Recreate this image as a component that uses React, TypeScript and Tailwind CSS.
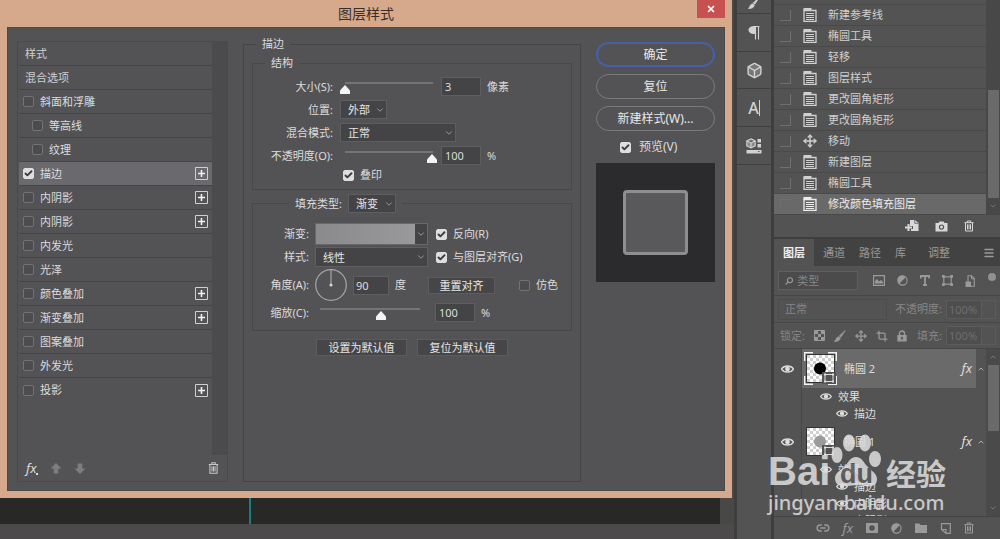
import React, { useState } from 'react';
import { Check, ChevronDown, ChevronUp, Box, Move, X, Crop, Menu, Link2 } from 'lucide-react';

type StyleItem = { id: string; name: string; checked: boolean; indent?: boolean; plus?: boolean };

const STYLE_ITEMS: StyleItem[] = [
  { id: 'bevel', name: '斜面和浮雕', checked: false },
  { id: 'contour', name: '等高线', checked: false, indent: true },
  { id: 'texture', name: '纹理', checked: false, indent: true },
  { id: 'stroke', name: '描边', checked: true, plus: true },
  { id: 'inner-shadow-1', name: '内阴影', checked: false, plus: true },
  { id: 'inner-shadow-2', name: '内阴影', checked: false, plus: true },
  { id: 'inner-glow', name: '内发光', checked: false },
  { id: 'satin', name: '光泽', checked: false },
  { id: 'color', name: '颜色叠加', checked: false, plus: true },
  { id: 'gradient', name: '渐变叠加', checked: false, plus: true },
  { id: 'pattern', name: '图案叠加', checked: false },
  { id: 'outer-glow', name: '外发光', checked: false },
  { id: 'drop', name: '投影', checked: false, plus: true },
];

const HISTORY = ['新建参考线', '椭圆工具', '轻移', '图层样式', '更改圆角矩形', '更改圆角矩形', '移动', '新建图层', '椭圆工具', '修改颜色填充图层'];

/* ---------- Icons ---------- */

const TrashIcon = ({ className }: { className?: string }) => (
  <svg viewBox="0 0 12 14" className={className} fill="none" stroke="currentColor" strokeWidth="1.2">
    <path d="M0.5 3h11M4 3V1h4v2M1.8 3.2V13h8.4V3.2M4.2 5v6M6 5v6M7.8 5v6" />
  </svg>
);

const DocIcon = () => (
  <svg viewBox="0 0 14 14" className="size-[14px]">
    <path d="M0.5 0h8v3h-8z" fill="currentColor" />
    <path d="M1 2.500h12v11H1z" fill="none" stroke="currentColor" strokeWidth="1.300" />
    <path d="M3 5.500h8M3 7.500h8M3 9.500h8M3 11.500h8" stroke="currentColor" strokeWidth="1.100" />
  </svg>
);

const EyeIcon = ({ className }: { className?: string }) => (
  <svg viewBox="0 0 13 10" className={className}>
    <path d="M0.5 5C3 1 10 1 12.5 5 10 9 3 9 0.5 5z" fill="none" stroke="currentColor" strokeWidth="1.4" />
    <circle cx="6.5" cy="5" r="2.4" fill="currentColor" />
  </svg>
);

const CameraIcon = () => (
  <svg viewBox="0 0 13 11" className="h-[11px] w-[13px]">
    <path fillRule="evenodd" fill="currentColor" d="M0.5 2h3l1-1.6h4L9.500 2h3v8.500H.5zM6.500 3.400a2.700 2.700 0 1 0 0 5.400 2.700 2.700 0 0 0 0-5.400zm0 1.200a1.500 1.500 0 1 1 0 3 1.500 1.500 0 0 1 0-3z" />
  </svg>
);

const NewDocIcon = () => (
  <svg viewBox="0 0 14 12" className="h-3 w-[14px]">
    <path d="M5 0h5l3.500 3v8H6V9h2V6H5z" fill="currentColor" />
    <path d="M9.800 0v3.300h3.500" fill="none" stroke="#535353" strokeWidth=".8" />
    <path d="M0 7.500h7M3.500 4v7" stroke="currentColor" strokeWidth="2" />
  </svg>
);

const ImageIcon = () => (
  <svg viewBox="0 0 12 11" className="h-[11px] w-3">
    <path d="M.6.6h10.800v9.800H.6z" fill="none" stroke="currentColor" strokeWidth="1.200" />
    <path d="M2 8.500V6l2-2 2 2.500 2-1.500 2 2v1.500z" fill="currentColor" />
  </svg>
);

const HalfCircleIcon = () => (
  <svg viewBox="0 0 12 12" className="size-[11px]">
    <circle cx="6" cy="6" r="5" fill="none" stroke="currentColor" strokeWidth="1.200" />
    <path d="M9.500 2.500A5 5 0 1 0 2.500 9.500z" fill="currentColor" />
  </svg>
);

const TypeIcon = () => (
  <svg viewBox="0 0 10 11" className="h-[11px] w-[10px]">
    <path d="M.8 3.500V1h8.400v2.500M5 1v9M3 10h4" fill="none" stroke="currentColor" strokeWidth="1.800" />
  </svg>
);

const ShapeIcon = ({ className }: { className?: string }) => (
  <svg viewBox="0 0 12 12" className={className}>
    <path d="M2 2h8v8H2z" fill="none" stroke="currentColor" strokeWidth="1.300" />
    <path d="M0 0h3v3H0zM9 0h3v3H9zM0 9h3v3H0zM9 9h3v3H9z" fill="currentColor" />
  </svg>
);

const SmartIcon = () => (
  <svg viewBox="0 0 10 12" className="h-3 w-[10px]">
    <path d="M3 7V.8h3.500L9.300 3.500v7.700H6" fill="none" stroke="currentColor" strokeWidth="1.100" />
    <path d="M6.500.8v3h2.800" fill="none" stroke="currentColor" />
    <path d="M.5 6.500h5.500V12H.5z" fill="currentColor" />
  </svg>
);

const CheckerIcon = () => (
  <svg viewBox="0 0 11 11" className="size-[11px]">
    <path d="M.5.5h10v10H.5z" fill="none" stroke="currentColor" />
    <path d="M1 1h3v3H1zM7 1h3v3H7zM4 4h3v3H4zM1 7h3v3H1zM7 7h3v3H7z" fill="currentColor" />
  </svg>
);

const BrushIcon = ({ className }: { className?: string }) => (
  <svg viewBox="0 0 12 12" className={className}>
    <path d="M11.500.3 6.800 7.200 5.200 5.900zM4.500 6.700l1.800 1.500C6 10.500 3.500 11.800.3 11.500c1.700-1 1.500-4 4.200-4.800z" fill="currentColor" stroke="currentColor" strokeWidth=".7" />
  </svg>
);

const LockIcon = () => (
  <svg viewBox="0 0 10 12" className="h-3 w-[10px]">
    <path d="M2.500 5V3.500a2.500 2.500 0 0 1 5 0V5" fill="none" stroke="currentColor" strokeWidth="1.400" />
    <path fillRule="evenodd" d="M.3 5h9.400v6.500H.3zM5 6.800a1 1 0 0 0-.5 1.900v1.300h1V8.700A1 1 0 0 0 5 6.800z" fill="currentColor" />
  </svg>
);

const ArrowIcon = ({ className }: { className?: string }) => (
  <svg viewBox="0 0 12 11" className={className}>
    <path d="M6 0l5.500 5.500H8.300V10.500H3.700V5.500H.5z" fill="currentColor" />
  </svg>
);

const PilcrowIcon = () => (
  <svg viewBox="0 0 12 15" className="h-[15px] w-3">
    <path d="M7 1v8C3 9 .5 7.500.5 5S3 1 7 1z" fill="currentColor" />
    <path d="M7.500 1v13.500M10.500 1v13.500M6 1.500h5.500" stroke="currentColor" strokeWidth="1.100" fill="none" />
  </svg>
);

const LibraryIcon = () => (
  <svg viewBox="0 0 16 16" className="size-4">
    <path d="M5 .8l4.200 2v5L5 10 .8 7.800v-5zM.8 2.800 5 5l4.200-2.200M5 5v5" fill="#8a8a8a" stroke="currentColor" strokeWidth="1.100" />
    <path d="M11.500 1h3.500v3.500h-3.500zM11.500 6h3.500v3.500h-3.500zM.5 12h15v3.500H.5z" fill="currentColor" />
    <path d="M11.500 13h2.500l-1.200 1.300z" fill="#535353" />
  </svg>
);

const MaskIcon = () => (
  <svg viewBox="0 0 12 10" className="h-[10px] w-3">
    <path fillRule="evenodd" d="M0 0h12v10H0zM6 2.200a2.800 2.800 0 1 0 0 5.600 2.800 2.800 0 0 0 0-5.600z" fill="currentColor" />
  </svg>
);

const FolderIcon = () => (
  <svg viewBox="0 0 12 10" className="h-[10px] w-3">
    <path d="M0 .5h4.500L5.500 2H12v8H0z" fill="currentColor" />
  </svg>
);

const NewLayerIcon = () => (
  <svg viewBox="0 0 11 11" className="size-[11px]">
    <path d="M1.500.6h8.800v9.800H6L1.500 6.500zM1.500 6.500H6v4" fill="none" stroke="currentColor" strokeWidth="1.200" />
  </svg>
);

/* ---------- Controls ---------- */

const CheckBox = ({ id, label, checked = false }: { id: string; label?: string; checked?: boolean }) => (
  <span className="inline-grid size-[11px] shrink-0">
    <input
      id={id}
      type="checkbox"
      aria-label={label}
      defaultChecked={checked}
      className="peer col-start-1 row-start-1 size-[11px] appearance-none rounded-xs border border-[#737376] bg-[#4c4c4f] checked:border-[#dededf] checked:bg-[#dededf]"
    />
    <Check strokeWidth={5} className="pointer-events-none invisible col-start-1 row-start-1 size-[9px] place-self-center text-[#3c3c3e] peer-checked:visible" />
  </span>
);

const Select = ({ id, label, value, className }: { id: string; label?: string; value: string; className: string }) => (
  <span className={`inline-grid shrink-0 ${className}`}>
    <select
      id={id}
      aria-label={label}
      className="col-start-1 row-start-1 h-full w-full appearance-none border border-[#5e5e61] bg-[#444446] pl-[7px] leading-none text-[#e4e4e4]"
    >
      <option>{value}</option>
    </select>
    <ChevronDown className="pointer-events-none col-start-1 row-start-1 mr-[2px] size-[10px] self-center justify-self-end text-[#a8a8a8]" />
  </span>
);

const Slider = ({ id, value, className }: { id: string; value: number; className: string }) => (
  <input
    id={id}
    type="range"
    defaultValue={value}
    className={`h-[19px] appearance-none bg-[linear-gradient(#757578,#757578)] bg-[position:center_5px] bg-no-repeat [&::-webkit-slider-runnable-track]:h-[19px] [&::-webkit-slider-thumb]:mt-2 [&::-webkit-slider-thumb]:h-[9px] [&::-webkit-slider-thumb]:w-[10px] [&::-webkit-slider-thumb]:appearance-none [&::-webkit-slider-thumb]:bg-[#f4f4f4] [&::-webkit-slider-thumb]:[clip-path:polygon(50%_0,100%_60%,100%_100%,0_100%,0_60%)] ${className}`}
  />
);

const NumberBox = ({ label, value, className = 'w-10' }: { label: string; value: string; className?: string }) => (
  <input aria-label={label} defaultValue={value} className={`h-[19px] border border-[#5e5e61] bg-[#444446] px-[3px] text-[#dcdcdc] ${className}`} />
);

const PlainButton = ({ children, className }: { children: React.ReactNode; className: string }) => (
  <button className={`h-[17px] border border-[#5c5c5f] bg-[#464649] leading-none text-[#e6e6e6] ${className}`}>{children}</button>
);

/* ---------- Dialog ---------- */

const StyleList = () => (
  <div className="flex w-[211px] shrink-0 flex-col border border-[#4a4a4d]">
    <div className="flex flex-1">
      <ul className="flex-1 pl-px">
        <li className="flex h-6 items-center border-b border-[#454548] pl-1.5 text-[#cfcfcf]">样式</li>
        <li className="flex h-6 items-center border-b border-[#454548] pl-1.5 text-[#cfcfcf]">混合选项</li>
        {STYLE_ITEMS.map((item, i) => (
          <li
            key={item.id}
            className={`flex h-6 items-center gap-1.5 pr-1 ${item.indent ? 'pl-[13px]' : 'pl-1'} ${item.checked ? 'bg-[#6a6a6e]' : ''} ${i < STYLE_ITEMS.length - 1 ? 'border-b border-[#454548]' : ''}`}
          >
            <CheckBox id={item.id} checked={item.checked} />
            <label htmlFor={item.id} className="flex-1">{item.name}</label>
            {item.plus && (
              <button aria-label={`添加${item.name}`} className="size-[13px]">
                <svg viewBox="0 0 13 13" className="size-[13px]">
                  <path d="M.5.5h12v12H.5z" fill="none" stroke="#cfcfcf" />
                  <path d="M3 6.500h7M6.500 3v7" stroke="#f0f0f0" strokeWidth="1.600" />
                </svg>
              </button>
            )}
          </li>
        ))}
      </ul>
      <div className="w-[15px] bg-[#4b4b4e]" />
    </div>
    <div className="flex h-[26px] items-center gap-3 pr-2 pl-2">
      <button aria-label="效果" className="flex items-end text-[13px] leading-none italic">
        fx<span className="size-0.5 bg-current" />
      </button>
      <button aria-label="上移"><ArrowIcon className="h-[11px] w-3 text-[#7d7d80]" /></button>
      <button aria-label="下移"><ArrowIcon className="h-[11px] w-3 rotate-180 text-[#7d7d80]" /></button>
      <button aria-label="删除" className="ml-auto"><TrashIcon className="h-3 w-[11px] text-[#c8c8c8]" /></button>
    </div>
  </div>
);

const StrokePanel = () => (
  <fieldset className="-mt-1 min-w-0 flex-1 border border-[#454548] px-2">
    <legend className="ml-1 px-1.5 leading-[14px]">描边</legend>

    <fieldset className="mt-1 border border-[#48484b] pb-2">
      <legend className="ml-3 px-1.5 leading-4">结构</legend>
      <div className="flex flex-col gap-1 pt-1.5">
        <div className="flex items-center">
          <label htmlFor="size" className="mr-[7px] w-20 text-right">大小(S):</label>
          <Slider id="size" value={0} className="mr-1 w-[97px] bg-[length:88px_2px]" />
          <NumberBox label="大小" value="3" />
          <span className="ml-1.5">像素</span>
        </div>
        <div className="flex items-center">
          <label htmlFor="position" className="mr-[7px] w-20 text-right">位置:</label>
          <Select id="position" value="外部" className="h-[19px] w-[47px]" />
        </div>
        <div className="flex items-center">
          <label htmlFor="blend" className="mr-[7px] w-20 text-right">混合模式:</label>
          <Select id="blend" value="正常" className="h-[19px] w-[116px]" />
        </div>
        <div className="flex items-center">
          <label htmlFor="opacity" className="mr-[7px] w-20 text-right">不透明度(O):</label>
          <Slider id="opacity" value={100} className="mr-1 w-[97px] bg-[length:88px_2px]" />
          <NumberBox label="不透明度" value="100" />
          <span className="ml-1.5">%</span>
        </div>
        <div className="flex h-3 items-center gap-1.5 pl-[90px]">
          <CheckBox id="overprint" checked />
          <label htmlFor="overprint">叠印</label>
        </div>
      </div>
    </fieldset>

    <fieldset className="mt-1 border border-[#48484b] pb-2">
      <legend className="ml-9 flex items-center gap-1.5 px-1.5">
        <label htmlFor="fill-type">填充类型:</label>
        <Select id="fill-type" value="渐变" className="h-[19px] w-12" />
      </legend>
      <div className="flex flex-col gap-0.5 pt-2.5">
        <div className="flex items-center">
          <label htmlFor="gradient-swatch" className="mr-1.5 w-14 text-right">渐变:</label>
          <button id="gradient-swatch" className="flex h-[22px] w-[113px] border border-[#68686b] bg-[#444446]">
            <span className="h-full flex-1 bg-linear-to-r from-[#8a8a8d] to-[#99999c]" />
            <span className="flex h-full w-3 items-center justify-center">
              <ChevronDown className="size-[10px] text-[#a8a8a8]" />
            </span>
          </button>
          <span className="ml-2 flex items-center gap-1.5">
            <CheckBox id="reverse" checked />
            <label htmlFor="reverse">反向(R)</label>
          </span>
        </div>
        <div className="flex items-center">
          <label htmlFor="line-style" className="mr-1.5 w-14 text-right">样式:</label>
          <Select id="line-style" value="线性" className="h-5 w-[113px]" />
          <span className="ml-2 flex items-center gap-1.5">
            <CheckBox id="align" checked />
            <label htmlFor="align">与图层对齐(G)</label>
          </span>
        </div>
        <div className="flex items-center">
          <label htmlFor="angle" className="mr-1.5 w-14 text-right">角度(A):</label>
          <svg viewBox="0 0 32 32" className="mr-1.5 size-8">
            <circle cx="16" cy="16" r="15.300" fill="none" stroke="#a6a6a8" strokeWidth="1.200" />
            <path d="M16 1v15" stroke="#a6a6a8" strokeWidth="1.200" />
            <circle cx="16" cy="16" r="1.600" fill="#d4d4d4" />
          </svg>
          <input id="angle" defaultValue="90" className="h-[19px] w-9 border border-[#5e5e61] bg-[#444446] px-0.5" />
          <span className="ml-1.5">度</span>
          <PlainButton className="ml-[22px] w-[67px]">重置对齐</PlainButton>
          <span className="ml-6 flex items-center gap-1.5">
            <CheckBox id="dither" />
            <label htmlFor="dither">仿色</label>
          </span>
        </div>
        <div className="flex items-center">
          <label htmlFor="scale" className="mr-1.5 w-14 text-right">缩放(C):</label>
          <Slider id="scale" value={61} className="mr-2.5 w-[110px] bg-[length:100px_2px]" />
          <NumberBox label="缩放" value="100" />
          <span className="ml-1.5">%</span>
        </div>
      </div>
    </fieldset>

    <div className="mt-2 flex gap-2.5 pl-16">
      <PlainButton className="w-[91px]">设置为默认值</PlainButton>
      <PlainButton className="w-[91px]">复位为默认值</PlainButton>
    </div>
  </fieldset>
);

const DialogActions = () => (
  <div className="flex w-[119px] shrink-0 flex-col pt-px text-xs">
    <div className="flex flex-col gap-[7px]">
      <button className="h-[25px] rounded-full border-2 border-[#4560a6] text-[#e8e8e8]">确定</button>
      <button className="h-[25px] rounded-full border border-[#7b7b7e] text-[#e8e8e8]">复位</button>
      <button className="h-[25px] rounded-full border border-[#7b7b7e] text-[#e8e8e8]">新建样式(W)...</button>
    </div>
    <div className="mt-2 flex h-4 items-center gap-2 pl-6">
      <CheckBox id="preview" checked />
      <label htmlFor="preview">预览(V)</label>
    </div>
    <div className="mt-2 flex aspect-square items-center justify-center bg-[#2b2b2d]">
      <div className="size-[65px] rounded-sm border-[3px] border-[#8e8e90] bg-[#59595b]" />
    </div>
  </div>
);

const LayerStyleDialog = () => (
  <section className="mr-0.5 flex min-h-0 flex-1 flex-col border-x-[7px] border-b-[7px] border-[#d6a98d] bg-[#d6a98d]">
    <header className="grid h-[27px] shrink-0 grid-cols-[1fr_auto_1fr] items-center">
      <h1 className="col-start-2 text-sm leading-none text-[#3a2e28]">图层样式</h1>
      <button aria-label="关闭" className="flex h-[18px] w-7 items-center justify-center self-start justify-self-end bg-[#c75050] text-white">
        <X strokeWidth={4} className="size-[10px]" />
      </button>
    </header>
    <div className="flex flex-1 gap-[15px] border border-[#4b4a48] bg-[#535356] pt-[13px] pr-[9px] pb-2 pl-[9px]">
      <StyleList />
      <StrokePanel />
      <DialogActions />
    </div>
  </section>
);

/* ---------- Docked panels ---------- */

const ToolStrip = () => (
  <nav className="flex w-[34px] shrink-0 flex-col bg-[#535353] text-[#d2d2d2] [&>button]:flex [&>button]:items-center [&>button]:justify-center [&>button]:border-b [&>button]:border-[#3f3f3f]">
    <button aria-label="画笔" className="h-[14px] overflow-hidden"><BrushIcon className="mb-2 size-3" /></button>
    <button aria-label="段落" className="h-[38px]"><PilcrowIcon /></button>
    <button aria-label="3D" className="h-[37px]"><Box strokeWidth={2} className="size-[17px] fill-[#77777a]" /></button>
    <button aria-label="字符" className="h-[38px] text-base leading-none font-medium">A<span className="h-4 w-px bg-current" /></button>
    <button aria-label="库" className="h-[38px]"><LibraryIcon /></button>
  </nav>
);

const HistoryPanel = () => (
  <section className="flex flex-col bg-[#535353]">
    <div className="flex border-b border-[#484848]">
      <ol className="flex-1 pt-1">
        {HISTORY.map((name, i) => (
          <li key={i} className={`flex h-[21px] items-center border-t border-[#494949] pl-1.5 ${i === HISTORY.length - 1 ? 'bg-[#696969] text-[#ececec]' : 'text-[#d0d0d0]'}`}>
            <span className={`mr-3 size-[11px] border-[#6f6f6f] ${i === HISTORY.length - 1 ? 'border-t border-l border-[#4a4a4a]' : 'border-r border-b'}`} />
            {name === '移动' ? <Move strokeWidth={2.5} className="size-[14px]" /> : <DocIcon />}
            <span className="ml-[11px]">{name}</span>
          </li>
        ))}
      </ol>
      <div className="flex w-[14px] flex-col items-center bg-[#484848]">
        <div className="mt-[90px] w-[11px] flex-1 bg-[#6a6a6a]" />
        <ChevronDown className="my-1 size-2 text-[#8a8a8a]" />
      </div>
    </div>
    <div className="flex h-[22px] items-center justify-end gap-4 pr-[26px] text-[#d8d8d8]">
      <button aria-label="从当前状态创建新文档"><NewDocIcon /></button>
      <button aria-label="创建新快照"><CameraIcon /></button>
      <button aria-label="删除状态"><TrashIcon className="h-3 w-[10px]" /></button>
    </div>
  </section>
);

const LayerThumb = ({ selected }: { selected?: boolean }) => (
  <svg viewBox="0 0 33 33" className="size-[33px] shrink-0">
    <defs>
      <pattern id="checker" width="6" height="6" patternUnits="userSpaceOnUse">
        <path d="M0 0h6v6H0z" fill="#fff" />
        <path d="M0 0h3v3H0zM3 3h3v3H3z" fill="#cfcfcf" />
      </pattern>
    </defs>
    {selected && <path d="M.7 9V.7H9M24 .7h8.300V9M32.300 24v8.300H24M9 32.300H.7V24" fill="none" stroke="#f2f2f2" strokeWidth="1.400" />}
    <path d="M2.500 2.500h28v28h-28z" fill="url(#checker)" stroke="#333" />
    <circle cx="16" cy="16.500" r="6" fill={selected ? '#000' : '#9b9b9b'} />
    <path d="M18 20h14v12H18z" fill="#535353" />
    <path d="M21 22.500h8v7h-8z" fill="none" stroke="#ddd" />
    <path d="M20 21.500h2v2h-2zM28 21.500h2v2h-2zM20 28.500h2v2h-2zM28 28.500h2v2h-2z" fill="#ddd" />
  </svg>
);

const LayerRow = ({ name, selected }: { name: string; selected?: boolean }) => (
  <div className="flex h-[39px] shrink-0 items-center">
    <button aria-label="可见性" className="flex h-full w-7 items-center justify-center border-r border-[#474747]">
      <EyeIcon className="h-[10px] w-[13px]" />
    </button>
    <div className={`flex h-full flex-1 items-center pl-0.5 ${selected ? 'bg-[#6a6a6a]' : ''}`}>
      <LayerThumb selected={selected} />
      <span className="ml-[7px] flex-1">{name}</span>
      <span className="pr-1 text-[13px] leading-none italic">fx</span>
    </div>
    <ChevronUp className="mx-px size-2" />
  </div>
);

const EffectRow = ({ name, child }: { name: string; child?: boolean }) => (
  <div className="flex h-[17px] items-stretch">
    <span className="w-7 shrink-0 border-r border-[#474747]" />
    <span className={`flex items-center gap-1.5 ${child ? 'pl-[34px]' : 'pl-[18px]'}`}>
      <EyeIcon className="h-[9px] w-3" />
      {name}
    </span>
  </div>
);

const LayersPanel = () => {
  const [tab, setTab] = useState('图层');
  return (
    <section className="flex min-h-0 flex-1 flex-col bg-[#535353] text-[#9a9a9a]">
      <div className="flex h-[27px] shrink-0 items-stretch bg-[#424242]" role="tablist">
        {['图层', '通道', '路径', '库', '调整'].map(t => (
          <button
            key={t}
            role="tab"
            aria-selected={t === tab}
            onClick={() => setTab(t)}
            className={t === tab ? 'mr-0.5 bg-[#535353] px-[9px] font-bold text-[#efefef]' : t === '调整' ? 'ml-2 px-[7px]' : 'px-[7px]'}
          >
            {t}
          </button>
        ))}
        <button aria-label="面板菜单" className="mr-[5px] ml-auto"><Menu strokeWidth={3} className="size-3" /></button>
      </div>

      <div className="flex h-[30px] shrink-0 items-center gap-3 border-b border-[#464646] pl-1">
        <label className="mr-[3px] flex h-[19px] w-[80px] items-center gap-1 border border-[#5f5f5f] bg-[#4b4b4b] pl-1.5">
          <svg viewBox="0 0 10 10" className="size-[10px]"><circle cx="6" cy="4" r="3" fill="none" stroke="currentColor" strokeWidth="1.300" /><path d="M4 6 .8 9.200" stroke="currentColor" strokeWidth="1.400" /></svg>
          <input aria-label="类型" defaultValue="类型" className="w-full min-w-0 text-[#868686]" />
        </label>
        <ImageIcon />
        <HalfCircleIcon />
        <TypeIcon />
        <ShapeIcon className="size-[11px]" />
        <SmartIcon />
        <span className="mr-1 mb-2 ml-auto size-2 shrink-0 rounded-full bg-[#909090]" />
      </div>

      <div className="flex h-[27px] shrink-0 items-center border-b border-[#464646] pl-1 text-[#858585]">
        <select aria-label="混合模式" className="h-[21px] flex-1 appearance-none border border-[#4c4c4c] pl-1.5 text-[#858585]"><option>正常</option></select>
        <label htmlFor="layer-opacity" className="mr-1 ml-2">不透明度:</label>
        <input id="layer-opacity" defaultValue="100%" className="h-[19px] w-9 border border-[#5b5b5b] bg-[#4e4e4e] px-0.5 text-[#6d6d6d]" />
        <span className="mr-1 h-[19px] w-[14px] border border-l-0 border-[#5b5b5b]" />
      </div>

      <div className="flex h-[26px] shrink-0 items-center gap-[9px] border-b border-[#464646] pl-1.5">
        <span className="text-[#858585]">锁定:</span>
        <CheckerIcon />
        <BrushIcon className="size-3" />
        <Move strokeWidth={2.5} className="size-3" />
        <Crop strokeWidth={2.5} className="size-3" />
        <LockIcon />
        <span className="ml-auto flex items-center text-[#858585]">
          <label htmlFor="layer-fill" className="mr-1">填充:</label>
          <input id="layer-fill" defaultValue="100%" className="h-[19px] w-9 border border-[#5b5b5b] bg-[#4e4e4e] px-0.5 text-[#6d6d6d]" />
          <span className="mr-1 h-[19px] w-[14px] border border-l-0 border-[#5b5b5b]" />
        </span>
      </div>

      <div className="flex min-h-0 flex-1 text-[#dcdcdc]">
        <div className="flex-1 overflow-hidden">
          <LayerRow name="椭圆 2" selected />
          <EffectRow name="效果" />
          <EffectRow name="描边" child />
          <LayerRow name="椭圆 1" />
          <EffectRow name="效果" />
          <EffectRow name="描边" child />
          <EffectRow name="内阴影" child />
          <EffectRow name="内阴影" child />
        </div>
        <div className="flex w-[14px] flex-col items-center bg-[#4a4a4a] text-[#909090]">
          <ChevronUp className="my-1 size-2" />
          <div className="h-[66px] w-[11px] bg-[#6a6a6a]" />
          <ChevronDown className="mt-auto mb-1 size-2" />
        </div>
      </div>

      <div className="flex h-[23px] shrink-0 items-center justify-end gap-[13px] border-t border-[#444] pr-[26px]">
        <button aria-label="链接图层"><Link2 strokeWidth={2.5} className="size-[14px]" /></button>
        <button aria-label="图层效果" className="text-[13px] leading-none italic">fx</button>
        <button aria-label="蒙版"><MaskIcon /></button>
        <button aria-label="调整图层"><HalfCircleIcon /></button>
        <button aria-label="新建组"><FolderIcon /></button>
        <button aria-label="新建图层"><NewLayerIcon /></button>
        <button aria-label="删除图层"><TrashIcon className="h-3 w-[10px]" /></button>
      </div>
    </section>
  );
};

// Site mark laid over the lower right corner
const Watermark = () => (
  <div className="pointer-events-none absolute right-[54px] bottom-[23px] w-[178px] text-[#dedede] opacity-85">
    <div className="relative flex h-[58px] items-end justify-between">
      <span className="font-['Liberation_Sans'] text-[40px] leading-[37px] font-bold">Bai</span>
      <svg viewBox="0 0 50 58" className="absolute bottom-0 left-[63px] h-[58px] w-[50px]" fill="currentColor">
        <ellipse cx="18" cy="11" rx="6" ry="8.500" />
        <ellipse cx="34" cy="11" rx="6" ry="8.500" />
        <ellipse cx="6" cy="23" rx="5.500" ry="8" />
        <ellipse cx="44" cy="27" rx="6" ry="8" />
        <path d="M25 25c5 0 7 4 10 8 5 6 11 8 11 14 0 8-8 8-13 7-5-1-11-1-16 0C11 55 4 54 4 46c0-6 7-8 11-13 3-4 5-8 10-8z" />
      </svg>
      <span className="absolute bottom-0 left-[72px] font-['Liberation_Sans'] text-[27px] leading-[32px] font-bold text-[#5c5c5c]">du</span>
      <span className="text-[30px] leading-[33px] font-bold">经验</span>
    </div>
    <div className="text-xl leading-[26px] font-medium">jingyan.baidu.com</div>
  </div>
);

export default function App() {
  return (
    <main className="relative flex h-screen overflow-hidden bg-[#3e3e3e] font-['Noto_Sans','Noto_Sans_CJK_SC',sans-serif] text-[11px] leading-4 text-[#dcdcdc]">
      <div className="mr-[3px] flex min-w-0 flex-1 flex-col bg-[#484846]">
        <LayerStyleDialog />
        <div className="mr-[14px] h-[26px] shrink-0 bg-[#282827]">
          <div className="ml-[249px] h-full w-0.5 bg-[#17807a]" />
        </div>
        <div className="h-[15px] shrink-0 bg-[#4c4a4b]" />
      </div>
      <ToolStrip />
      <aside className="ml-[3px] flex w-[226px] shrink-0 flex-col gap-0.5">
        <HistoryPanel />
        <LayersPanel />
      </aside>
      <Watermark />
    </main>
  );
}
